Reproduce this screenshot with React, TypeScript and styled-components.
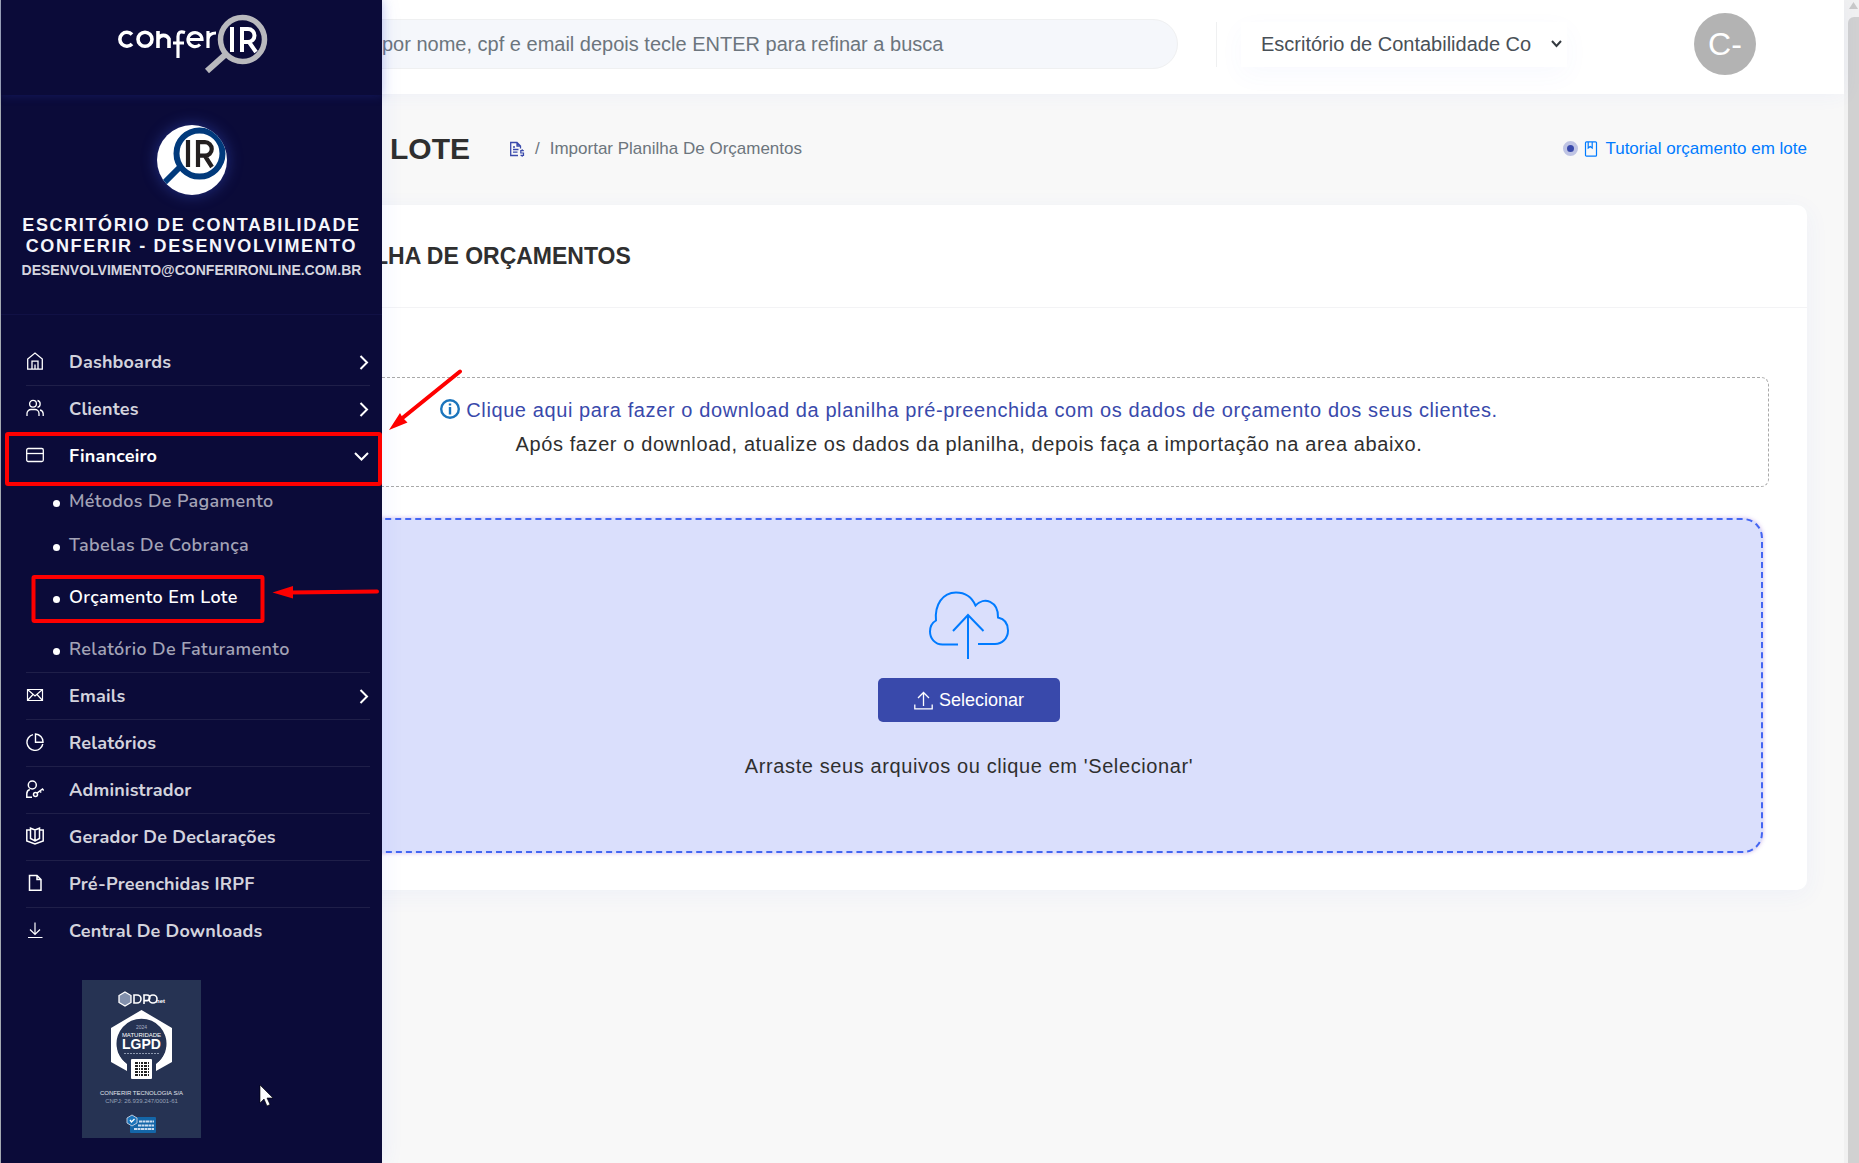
import React from "react";
import styled, { createGlobalStyle, css } from "styled-components";

const sans = `"Liberation Sans", Arial, Helvetica, sans-serif`;
const round = `Nunito, Lato, "Open Sans", sans-serif`;

const GlobalStyle = createGlobalStyle`
  *, *::before, *::after { box-sizing: border-box; }
  html { height: 100%; overflow: hidden; }
  body {
    margin: 0;
    height: 100%;
    background: #f8f8f8;
    color: #2f2f2f;
    font-family: ${sans};
    font-size: 18px;
  }
  #root { height: 100%; }
  a { text-decoration: none; }
  button { font: inherit; cursor: pointer; }
`;

const Shell = styled.div`
  position: relative;
  display: flex;
  min-height: 100vh;
  overflow: hidden;
`;

/* ---------- page ---------- */

const Page = styled.div`
  flex: 1;
  min-width: 0;
  padding-left: 91px;
`;

const TopBar = styled.header`
  position: relative;
  display: flex;
  align-items: center;
  height: 94px;
  padding: 0 88px 6px 40px;
  background: #fff;
  box-shadow: 0 0 20px rgba(68, 102, 242, 0.06);
`;

const Search = styled.input`
  flex: 1;
  min-width: 0;
  height: 50px;
  padding: 0 24px 0 250px;
  border: 1px solid #eff0f1;
  border-radius: 25px;
  background: #f5f7fb;
  font: 20px ${sans};
  color: #2f2f2f;
  &::placeholder { color: #6c757d; opacity: 1; }
`;

const OfficeField = styled.div`
  position: relative;
  display: flex;
  align-items: center;
  height: 45px;
  margin: 0 127px 0 38px;
  padding-left: 24px;
  border-left: 1px solid #eff0f1;
  svg { position: absolute; right: 5px; pointer-events: none; }
`;

const Office = styled.select`
  appearance: none;
  width: 326px;
  height: 45px;
  padding: 0 24px 0 20px;
  border: 0;
  background: #fff;
  box-shadow: 0 8px 26px rgba(68, 102, 242, 0.04);
  font: 20px ${sans};
  color: #495057;
`;

const Avatar = styled.div`
  display: grid;
  place-items: center;
  width: 62px;
  height: 62px;
  border-radius: 50%;
  background: #b3b3b3;
  color: #fff;
  font-size: 32px;
`;

const Content = styled.main`
  padding: 0 37px 40px 40px;
`;

const TitleRow = styled.div`
  display: flex;
  align-items: center;
  height: 111px;
  padding: 0 0 2px 259px;
`;

const Title = styled.h1`
  margin: 0;
  font-size: 30px;
  font-weight: 700;
`;

const Crumbs = styled.nav`
  flex: 1;
  display: flex;
  align-items: center;
  gap: 10px;
  margin-left: 39px;
  color: #6c757d;
  font-size: 17px;
  a { display: flex; color: #3949ab; }
`;

const Tutorial = styled.a`
  display: flex;
  align-items: center;
  color: #007bff;
  font-size: 17px;
  svg { margin: 0 6px 0 5px; }
`;

const Pulse = styled.span`
  width: 15px;
  height: 15px;
  border: 4px solid #bfc4e4;
  border-radius: 50%;
  background: #3949ab;
`;

const Card = styled.section`
  border-radius: 10px;
  background: #fff;
  box-shadow: 1px 5px 24px rgba(68, 102, 242, 0.05);
`;

const CardHead = styled.header`
  display: flex;
  align-items: center;
  height: 103px;
  padding: 0 38px 0 243px;
  border-bottom: 1px solid #f3f3f5;
  h2 { margin: 0; font-size: 23px; font-weight: 700; }
`;

const CardBody = styled.div`
  padding: 69px 38px 37px;
`;

const Notice = styled.div`
  height: 110px;
  padding-top: 15px;
  border: 1px dashed #a9a9a9;
  border-radius: 8px;
  text-align: center;
  font-size: 20px;
  line-height: 34px;
  letter-spacing: 0.03em;
  p { margin: 0; }
  a { color: #3949ab; }
  svg { vertical-align: -2px; margin-right: 6px; }
`;

const DropZone = styled.div`
  display: flex;
  flex-direction: column;
  align-items: center;
  height: 335px;
  margin: 31px 6px 0;
  padding-top: 71px;
  border: 2px dashed #4466f2;
  border-radius: 20px;
  background: #dadffc;
  box-shadow: 0 0 4px rgba(120, 60, 200, 0.35);
  p {
    margin: 32px 0 0;
    font-size: 20px;
    line-height: 24px;
    letter-spacing: 0.03em;
  }
`;

const PickButton = styled.button`
  display: flex;
  align-items: center;
  justify-content: center;
  gap: 6px;
  width: 182px;
  height: 44px;
  margin-top: 19px;
  padding: 0;
  border: 0;
  border-radius: 5px;
  background: #3949ab;
  color: #fff;
  font-size: 18px;
`;

/* ---------- scroll bar ---------- */

const ScrollTrack = styled.div`
  display: flex;
  flex-direction: column;
  align-items: flex-end;
  width: 15px;
  background: #f1f1f1;
`;

const ScrollArrow = styled.svg`
  flex: none;
  margin-bottom: 8px;
`;

const ScrollThumb = styled.div`
  flex: 1;
  width: 11px;
  border-radius: 6px 0 0 0;
  background: #d1d1d1;
`;

/* ---------- sidebar ---------- */

const Sidebar = styled.aside`
  position: absolute;
  inset: 0 auto 0 0;
  width: 382px;
  border-left: 1px solid #a4a9b2;
  background: #0b0b39;
  color: #fff;
  box-shadow: 0 0 20px rgba(68, 102, 242, 0.1);
`;

const Brand = styled.div`
  height: 95px;
  padding: 14px 0 0 117px;
  box-shadow: 0 0 10px rgba(50, 70, 210, 0.26);
`;

const Profile = styled.div`
  display: flex;
  flex-direction: column;
  align-items: center;
  height: 220px;
  padding-top: 30px;
  border-bottom: 1px solid #111145;
  text-align: center;
  text-transform: uppercase;
  font-weight: 700;
  strong {
    margin-top: 20px;
    font-size: 18px;
    line-height: 21px;
    letter-spacing: 0.09em;
    color: #f5f6fb;
  }
  small { margin-top: 3px; font-size: 14px; line-height: 20px; color: #d5d5df; }
`;

const ProfileLogo = styled.svg`
  flex: none;
  border-radius: 50%;
  background: #fff;
  box-shadow: 0 0 16px rgba(68, 102, 242, 0.4);
`;

const Menu = styled.ul`
  margin: 0;
  padding: 24px 12px 0 25px;
  list-style: none;
  > li + li { border-top: 1px solid #1f1f49; }
`;

const MenuLink = styled.a<{ $active?: boolean }>`
  display: grid;
  grid-template-columns: 43px 1fr auto;
  align-items: center;
  height: 46px;
  padding-right: 1px;
  color: ${(p) => (p.$active ? "#fff" : "#d3d3dd")};
  font: 700 18px ${round};
  letter-spacing: 0.01em;
  > svg { color: #fff; }
  > svg:first-child { margin-bottom: 3px; }
`;

const SubMenu = styled.ul`
  margin: 0;
  padding: 0 0 1px;
  list-style: none;
`;

const SubLink = styled.a<{ $active?: boolean }>`
  display: flex;
  align-items: center;
  height: 44px;
  padding-left: 27px;
  color: #a3a3b6;
  font: 600 18px ${round};
  letter-spacing: 0.02em;
  &::before {
    content: "";
    width: 7px;
    height: 7px;
    margin: 5px 9px 0 0;
    border-radius: 50%;
    background: #fff;
  }
  ${(p) => p.$active && css`margin: 8px 0; color: #fff;`}
`;

const Seal = styled.div`
  margin: 26px 0 0 81px;
  width: 119px;
  height: 158px;
  svg { display: block; }
`;

/* ---------- annotations over the page ---------- */

const Marks = styled.svg`
  position: absolute;
  left: 0;
  top: 0;
  pointer-events: none;
`;

type IconProps = { children: React.ReactNode; size?: number; box?: number; width?: number };
const Icon = ({ children, size = 18, box = 18, width = 1 }: IconProps) => (
  <svg width={size} height={size} viewBox={`0 0 ${box} ${box}`} fill="none" stroke="currentColor" strokeWidth={width} aria-hidden="true">
    {children}
  </svg>
);

const menuIcons: Record<string, React.ReactNode> = {
  home: <Icon width={1.3}><path d="M1.700 17.200V7L9 1l7.300 6v10.200zM6 17V9.200h6V17M9 17v-4.500" /></Icon>,
  users: <Icon width={1.3}><path d="M1 17v-2.500a4 4 0 0 1 4-4h4a4 4 0 0 1 4 4V17M14 11a4 4 0 0 1 3.200 3.700V17M11.500 1.500a3.500 3.500 0 0 1 0 6.800" /><circle cx="7" cy="4.800" r="3.400" /></Icon>,
  card: <Icon width={1.3}><rect x=".7" y="2.500" width="16.600" height="13" rx="1.500" /><path d="M.7 7.500h16.600" /></Icon>,
  mail: <Icon width={1.2}><path d="M1.500 3.500h15v11h-15zM1.500 3.500L9 10l7.500-6.500M1.500 14.500l5.500-6M16.500 14.500l-5.500-6" /></Icon>,
  pie: <Icon width={1.4}><path d="M7 1.600A8 8 0 1 0 16.800 11M9.500 1v8.200H17A8 8 0 0 0 9.500 1z" /></Icon>,
  admin: <Icon width={1.5}><circle cx="6.300" cy="5" r="4" /><path d="M6 17.300H.8v-3.500a4.500 4.500 0 0 1 3-4.300M11 13.200l5.500-4.200 1.200 1.500M14 11l1.200 1.500" /><circle cx="9.500" cy="14.500" r="2" /></Icon>,
  book: <Icon width={1.5}><path d="M4.500 11.500V1.200L9 3l4.500-1.800v10.300L9 14zM9 3v11M4.500 3H.8v11L9 17l8.200-3V3h-3.700" /></Icon>,
  file: <Icon width={1.5}><path d="M3.500 1.500h7.500l4 4v10.800h-11.500zM11 1.500v4h4" /></Icon>,
  down: <Icon width={1.2}><path d="M9 1.500v12M4 8.500l5 5 5-5M2 16.500h14.500" /></Icon>,
};

const Chevron = ({ down = false }: { down?: boolean }) => (
  <svg width="15" height="15" viewBox="0 0 15 15" fill="none" stroke="currentColor" strokeWidth="2" aria-hidden="true">
    <path d={down ? "M1 4l6.500 6.500L14 4" : "M6.500 1l6.500 6.500L6.500 14"} />
  </svg>
);

type Entry = { label: string; icon: string; arrow?: "right" | "down"; sub?: string[] };
const entries: Entry[] = [
  { label: "Dashboards", icon: "home", arrow: "right" },
  { label: "Clientes", icon: "users", arrow: "right" },
  { label: "Financeiro", icon: "card", arrow: "down", sub: ["Métodos De Pagamento", "Tabelas De Cobrança", "Orçamento Em Lote", "Relatório De Faturamento"] },
  { label: "Emails", icon: "mail", arrow: "right" },
  { label: "Relatórios", icon: "pie" },
  { label: "Administrador", icon: "admin" },
  { label: "Gerador De Declarações", icon: "book" },
  { label: "Pré-Preenchidas IRPF", icon: "file" },
  { label: "Central De Downloads", icon: "down" },
];

const Logo = () => (
  <svg width="152" height="60" viewBox="0 0 152 60" role="img" aria-label="conferIR">
    <g fill="none" stroke="#fff" strokeWidth="3.600">
      <path d="M14 20.500a7 7 0 1 0 0 9.500" />
      <circle cx="27" cy="25.300" r="7" />
      <path d="M40 34V17M40 25a6 6 0 0 1 11 0v9" />
      <path d="M67 18.500c-5-1.500-7 0-7 4V44M55 29h11" strokeWidth="3.200" />
      <path d="M70 25.500h14a7 7 0 1 0-2 5" strokeWidth="3.200" />
      <path d="M90 34V17M90 25q1-6 8-6" strokeWidth="3.200" />
      <path d="M114 13v25M124 38V15h6a6 6 0 0 1 0 13h-6M131 28l7 10" strokeWidth="4" />
    </g>
    <circle cx="124.500" cy="25.500" r="22" fill="none" stroke="#b9b9bd" strokeWidth="5.500" />
    <path d="M108 40L89 57" stroke="#b9b9bd" strokeWidth="6" />
  </svg>
);

const SealArt = () => (
  <svg width="119" height="158" viewBox="0 0 119 158" role="img" aria-label="Selo DPOnet de maturidade LGPD">
    <rect width="119" height="158" fill="#263353" />
    <path d="M43 12l6 3.500v7L43 26l-6-3.500v-7z" fill="#8290ac" stroke="#fff" strokeWidth="1.300" />
    <g fill="none" stroke="#fff" strokeWidth="1.600">
      <path d="M52 15h3a4 4 0 0 1 0 8h-3zM62 24v-9h3a2.800 2.800 0 0 1 0 5.600h-3" />
      <circle cx="71" cy="19" r="4" />
    </g>
    <path d="M59.500 30L90 48v34L74 91V84A25 25 0 1 0 45 84v7L29 82V48z" fill="#fff" />
    <circle cx="59.500" cy="64" r="24.500" fill="#263353" />
    <path d="M42 73.500h36" stroke="#8d99b0" strokeDasharray="2 1" />
    <rect x="49" y="79" width="21" height="20" rx="1" fill="#fff" />
    <path d="M53 83h14M53 86h14M53 89h14M53 92h14M53 95h14" stroke="#222" strokeWidth="2" strokeDasharray="3 1 1 1 2 1" />
    <g fill="#fff" textAnchor="middle" fontFamily={sans}>
      <text x="83" y="23" fontSize="6" textAnchor="end" fontWeight="700">net</text>
      <text x="59.500" y="49" fontSize="5" fill="#a9b2c5">2024</text>
      <text x="59.500" y="57" fontSize="6">MATURIDADE</text>
      <text x="59.500" y="69" fontSize="14" fontWeight="700">LGPD</text>
      <text x="59.500" y="115" fontSize="6" fill="#e0e4ec">CONFERIR TECNOLOGIA S/A</text>
      <text x="59.500" y="123" fontSize="6" fill="#97a2b8">CNPJ: 26.939.247/0001-61</text>
    </g>
    <rect x="48" y="137" width="26" height="16" rx="1" fill="#1466a8" />
    <path d="M50 135l5 3v5l-5 3-5-3v-5z" fill="#1b75bb" stroke="#b9c7dc" />
    <path d="M48 140l1.500 2 3-3" fill="none" stroke="#fff" strokeWidth="1.300" />
    <path d="M57 141.500h15M56 145.500h16M52 149h20" stroke="#c9dcf0" strokeWidth="2" strokeDasharray="3 .5" />
  </svg>
);

export default function App() {
  return (
    <>
      <GlobalStyle />
      <Shell>
        <Page>
          <TopBar>
            <Search type="search" aria-label="Pesquisar clientes" placeholder="por nome, cpf e email depois tecle ENTER para refinar a busca" />
            <OfficeField>
              <Office aria-label="Escritório">
                <option>Escritório de Contabilidade Co</option>
              </Office>
              <svg width="11" height="8" viewBox="0 0 11 8" fill="none" stroke="#343a40" strokeWidth="2" aria-hidden="true">
                <path d="M1 1l4.500 5L10 1" />
              </svg>
            </OfficeField>
            <Avatar>C-</Avatar>
          </TopBar>
          <Content>
            <TitleRow>
              <Title>LOTE</Title>
              <Crumbs aria-label="Trilha">
                <a href="#orcamentos" aria-label="Orçamentos">
                  <Icon size={16} box={16} width={1.3}>
                    <path d="M9 14.500H1.700v-13h6.300l3.500 3.500V7.500M8 1.500V5h3.500M4 6h2M4 8.500h5.500M4 11.200h4.500" />
                    <path d="M14.800 9.700h-3v2.300h2.700v2.300h-3M13.200 8.300v1.400M13.200 14.300v1.500" strokeWidth="1.200" />
                  </Icon>
                </a>
                <span>/</span>
                <span>Importar Planilha De Orçamentos</span>
              </Crumbs>
              <Tutorial href="#tutorial">
                <Pulse />
                <Icon size={16} box={16} width={1.2}>
                  <path d="M3.500.8h9a1 1 0 0 1 1 1v12.400a1 1 0 0 1-1 1h-9a1 1 0 0 1-1-1V1.800a1 1 0 0 1 1-1zM5.200 1v6l2-1.500 2 1.500V1" />
                </Icon>
                Tutorial orçamento em lote
              </Tutorial>
            </TitleRow>
            <Card>
              <CardHead><h2>LHA DE ORÇAMENTOS</h2></CardHead>
              <CardBody>
                <Notice>
                  <p>
                    <a href="#planilha">
                      <svg width="20" height="20" viewBox="0 0 20 20" fill="none" stroke="#1c75bc" strokeWidth="2.400" aria-hidden="true">
                        <circle cx="10" cy="10" r="8.800" />
                        <path d="M10 8v7.500M10 4.500v2" />
                      </svg>
                      Clique aqui para fazer o download da planilha pré-preenchida com os dados de orçamento dos seus clientes.
                    </a>
                  </p>
                  <p>Após fazer o download, atualize os dados da planilha, depois faça a importação na area abaixo.</p>
                </Notice>
                <DropZone>
                  <svg width="80" height="68" viewBox="0 0 80 68" fill="none" stroke="#007bff" strokeWidth="2" aria-hidden="true">
                    <path d="M29 53.500H13.500C6 53.500 1 47.500 1 40.500c0-5 2.500-9 6-11C5.500 14 13.500 1.500 27 1.500c9.500 0 16 5 19.500 13C55 5 69.500 10.500 69 26.500c7 1.500 10 7 10 13 0 8-6 13.500-13 13.500H49M39 68V24M24 40l15-16 15.500 16" />
                  </svg>
                  <PickButton type="button">
                    <Icon size={19} box={19} width={1.3}>
                      <path d="M9.500 15V1.500M4 7l5.500-5.500L15 7M.8 13.500v4.300h17.400v-4.300" />
                    </Icon>
                    Selecionar
                  </PickButton>
                  <p>Arraste seus arquivos ou clique em 'Selecionar'</p>
                </DropZone>
              </CardBody>
            </Card>
          </Content>
        </Page>
        <ScrollTrack aria-hidden="true">
          <ScrollArrow width="11" height="9" viewBox="0 0 11 9"><path d="M5.500 2L10 9H1z" fill="#c9c9c9" /></ScrollArrow>
          <ScrollThumb />
        </ScrollTrack>

        <Sidebar>
          <Brand><Logo /></Brand>
          <Profile>
            <ProfileLogo width="70" height="70" viewBox="0 0 70 70" role="img" aria-label="IR">
              <path d="M23 42L7 58" stroke="#013a7c" strokeWidth="6" />
              <circle cx="42.500" cy="28.500" r="23" fill="none" stroke="#013a7c" strokeWidth="6" />
              <path d="M31 15v27M41 42V17.200h7a6.500 6.500 0 0 1 0 13.500h-7M48 31l7 11" fill="none" stroke="#231f20" strokeWidth="4.200" />
            </ProfileLogo>
            <strong>Escritório de Contabilidade<br />ConferIR - Desenvolvimento</strong>
            <small>desenvolvimento@conferironline.com.br</small>
          </Profile>
          <nav aria-label="Menu principal">
            <Menu>
              {entries.map((e) => (
                <li key={e.label}>
                  <MenuLink href="#menu" $active={!!e.sub}>
                    {menuIcons[e.icon]}
                    <span>{e.label}</span>
                    {e.arrow && <Chevron down={e.arrow === "down"} />}
                  </MenuLink>
                  {e.sub && (
                    <SubMenu>
                      {e.sub.map((s) => (
                        <li key={s}><SubLink href="#submenu" $active={s === "Orçamento Em Lote"}>{s}</SubLink></li>
                      ))}
                    </SubMenu>
                  )}
                </li>
              ))}
            </Menu>
          </nav>
          <Seal><SealArt /></Seal>
        </Sidebar>

        <Marks width="480" height="1120" viewBox="0 0 480 1120" aria-hidden="true">
          <g fill="none" stroke="#fe0000" strokeWidth="4">
            <rect x="7" y="434" width="373" height="50" rx="1" />
            <rect x="33.500" y="577" width="229" height="44" rx="1" />
            <path d="M460 371.500L400 420M377 591.500L290 592.500" strokeLinecap="round" />
          </g>
          <path d="M389 430l11-17 2.500 4.500 5 5zM272.500 592.500l20.500-6.500v12.500z" fill="#fe0000" />
          <path d="M260 1085v18l4-4 3 7 3-1.500-3-6.500h6z" fill="#fff" stroke="#000" strokeWidth=".6" />
        </Marks>
      </Shell>
    </>
  );
}
